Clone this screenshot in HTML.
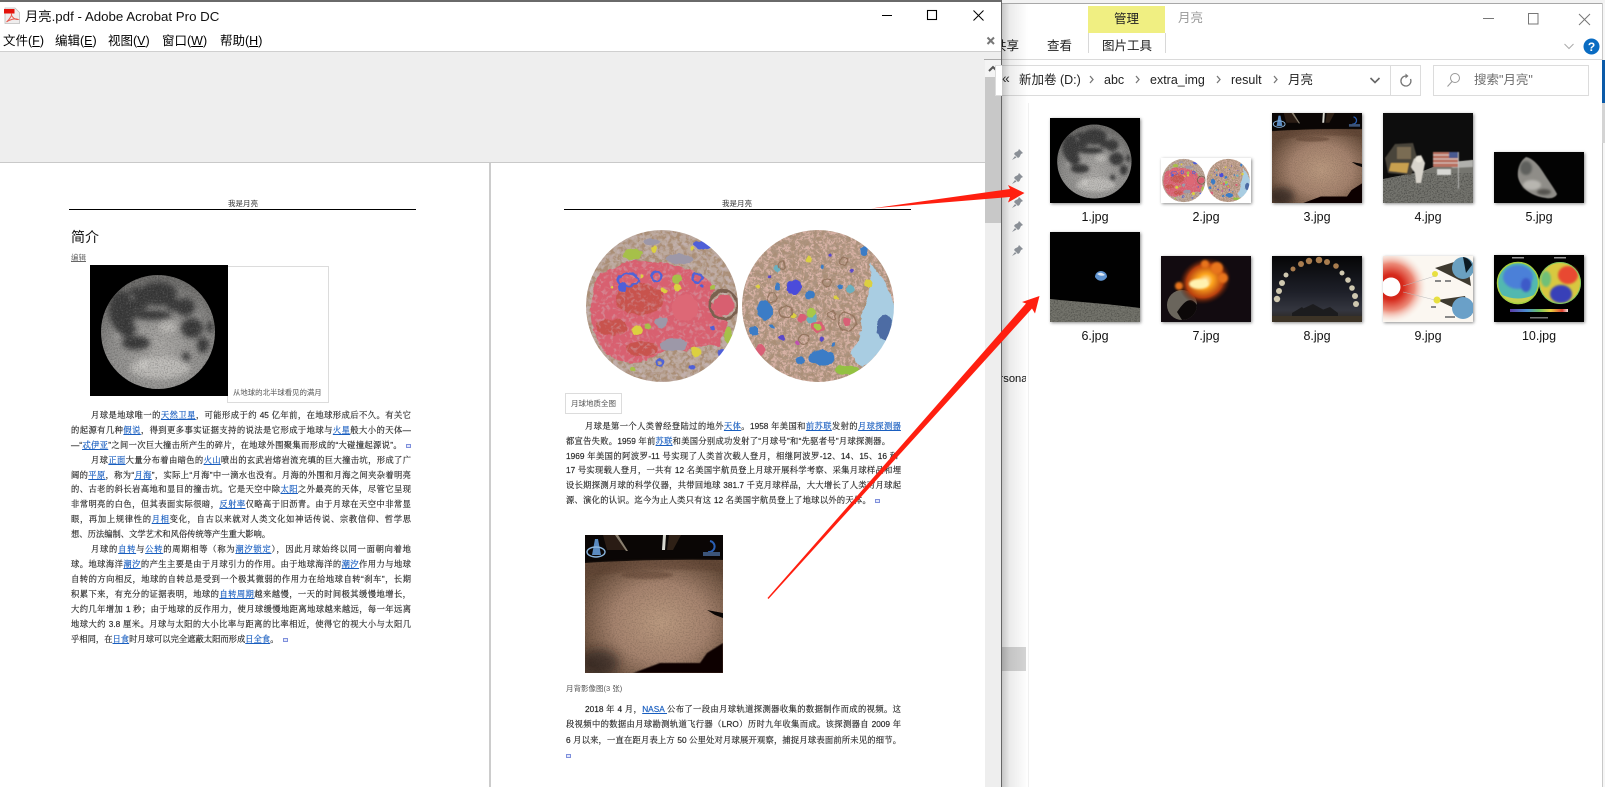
<!DOCTYPE html>
<html lang="zh"><head><meta charset="utf-8"><title>月亮.pdf - Adobe Acrobat Pro DC</title>
<style>
*{box-sizing:border-box}
html,body{margin:0;padding:0;width:1605px;height:787px;overflow:hidden;background:#fff}
body{position:relative;font-family:"Liberation Sans","Noto Sans CJK SC",sans-serif;color:#000}
.a{position:absolute}
.t{position:absolute;white-space:nowrap;line-height:1}
.l{position:absolute;height:12px;line-height:12px;font-size:8.3px;color:#222;white-space:normal;text-align:justify;text-align-last:justify;overflow:visible;font-family:"Liberation Sans","Noto Serif CJK SC",serif;-webkit-text-stroke:.18px #333}
.l.n{text-align-last:left;white-space:nowrap}
.l a{color:#1a5fc0;text-decoration:underline;-webkit-text-stroke:.18px #1a5fc0}
.r{display:inline-block;width:5px;height:4px;border:1px solid #7f90dc;background:#e4e8fa;margin-left:4px}
.m{position:absolute;top:34px;font-size:12.5px;line-height:14px;white-space:nowrap}
.m u{text-underline-offset:1px}
.th{position:absolute;box-shadow:1px 1px 3px rgba(0,0,0,.45);display:block}
.lb{position:absolute;width:90px;text-align:center;font-size:12.5px;line-height:14px;color:#111}
.cr{position:absolute;top:73px;font-size:12.5px;line-height:14px;color:#222;white-space:nowrap}
.sep{position:absolute;top:75px;width:5px;height:9px}
</style></head><body>

<svg width="0" height="0" style="position:absolute">
<defs>
<filter id="bl05" x="-10%" y="-10%" width="120%" height="120%"><feGaussianBlur stdDeviation=".5"/></filter>
<filter id="bl1" x="-30%" y="-30%" width="160%" height="160%"><feGaussianBlur stdDeviation="1"/></filter>
<filter id="bl2" x="-30%" y="-30%" width="160%" height="160%"><feGaussianBlur stdDeviation="2.600"/></filter>
<filter id="bl4" x="-30%" y="-30%" width="160%" height="160%"><feGaussianBlur stdDeviation="5"/></filter>
<filter id="grain" x="0" y="0" width="1" height="1"><feTurbulence type="fractalNoise" baseFrequency=".7" numOctaves="2" seed="5"/><feColorMatrix values="0 0 0 0 0 0 0 0 0 0 0 0 0 0 0 2.6 0 0 0 -1.1"/><feComposite in2="SourceAlpha" operator="in"/></filter>
<filter id="grainw" x="0" y="0" width="1" height="1"><feTurbulence type="fractalNoise" baseFrequency=".6" numOctaves="2" seed="11"/><feColorMatrix values="0 0 0 0 1 0 0 0 0 1 0 0 0 0 1 2.8 0 0 0 -1.35"/><feComposite in2="SourceAlpha" operator="in"/></filter>
<filter id="brown" x="0" y="0" width="1" height="1"><feTurbulence type="fractalNoise" baseFrequency=".22" numOctaves="3" seed="3"/><feColorMatrix values="0 0 0 0 .40 0 0 0 0 .27 0 0 0 0 .18 5 0 0 0 -2.100"/><feComposite in2="SourceAlpha" operator="in"/></filter>
<filter id="brownf" x="0" y="0" width="1" height="1"><feTurbulence type="fractalNoise" baseFrequency=".5" numOctaves="2" seed="17"/><feColorMatrix values="0 0 0 0 .42 0 0 0 0 .30 0 0 0 0 .22 6 0 0 0 -2.700"/><feComposite in2="SourceAlpha" operator="in"/></filter>
<filter id="purp" x="0" y="0" width="1" height="1"><feTurbulence type="fractalNoise" baseFrequency=".25" numOctaves="2" seed="8"/><feColorMatrix values="0 0 0 0 .62 0 0 0 0 .52 0 0 0 0 .6 5 0 0 0 -2.5"/><feComposite in2="SourceAlpha" operator="in"/></filter>
<filter id="rough" filterUnits="userSpaceOnUse" x="0" y="0" width="316" height="158"><feTurbulence type="fractalNoise" baseFrequency=".12" numOctaves="3" seed="21" result="n"/><feDisplacementMap in="SourceGraphic" in2="n" scale="5" xChannelSelector="R" yChannelSelector="G"/><feGaussianBlur stdDeviation=".35"/></filter>
<radialGradient id="mg" cx=".52" cy=".65" r=".62"><stop offset="0" stop-color="#aaa8a5"/><stop offset=".7" stop-color="#8f8e8c"/><stop offset="1" stop-color="#6c6b69"/></radialGradient>
<radialGradient id="soil" cx=".55" cy=".55" r=".62"><stop offset="0" stop-color="#bb9a80"/><stop offset=".55" stop-color="#a5836e"/><stop offset="1" stop-color="#664c3a"/></radialGradient>
<radialGradient id="sunr" gradientUnits="userSpaceOnUse" cx="8" cy="31" r="36"><stop offset="0" stop-color="#c81a12"/><stop offset=".35" stop-color="#d62a1c"/><stop offset=".65" stop-color="#ec8a78"/><stop offset="1" stop-color="#f8efe6" stop-opacity="0"/></radialGradient>
<radialGradient id="fire" cx=".5" cy=".5" r=".5"><stop offset="0" stop-color="#fff6c8"/><stop offset=".3" stop-color="#fca41e"/><stop offset=".7" stop-color="#b8400e"/><stop offset="1" stop-color="#3a1208" stop-opacity="0"/></radialGradient>
<linearGradient id="sky8" x1="0" x2="0" y1="0" y2="1"><stop offset="0" stop-color="#050506"/><stop offset=".55" stop-color="#1e2029"/><stop offset=".82" stop-color="#34363f"/><stop offset="1" stop-color="#29241c"/></linearGradient>
<linearGradient id="cb" x1="0" x2="1"><stop offset="0" stop-color="#5a3ca8"/><stop offset=".3" stop-color="#4a90d0"/><stop offset=".5" stop-color="#70c060"/><stop offset=".7" stop-color="#e8d040"/><stop offset=".9" stop-color="#e04030"/><stop offset="1" stop-color="#f0e0e0"/></linearGradient>
<clipPath id="mc"><circle cx="68" cy="67" r="57"/></clipPath>
<clipPath id="c1"><circle cx="80" cy="79" r="76"/></clipPath>
<clipPath id="c2"><circle cx="236" cy="79" r="76"/></clipPath>

<symbol id="moon" viewBox="0 0 138 131" preserveAspectRatio="none">
<rect width="138" height="131" fill="#000"/>
<circle cx="68" cy="67" r="57" fill="url(#mg)"/>
<g clip-path="url(#mc)">
<g fill="#3a3a3a" filter="url(#bl2)">
<ellipse cx="68" cy="29" rx="19" ry="12"/><ellipse cx="32" cy="46" rx="13" ry="20"/><ellipse cx="48" cy="34" rx="12" ry="12"/>
<ellipse cx="95" cy="42" rx="10" ry="9"/><ellipse cx="102" cy="63" rx="11" ry="10"/><ellipse cx="113" cy="80" rx="6" ry="8"/>
<ellipse cx="120" cy="62" rx="3.500" ry="6"/><ellipse cx="46" cy="78" rx="14" ry="7"/><ellipse cx="62" cy="50" rx="20" ry="5"/><ellipse cx="96" cy="92" rx="4" ry="5"/><ellipse cx="36" cy="64" rx="10" ry="8"/><ellipse cx="84" cy="40" rx="8" ry="6"/>
</g>
<g fill="#dedcd8" filter="url(#bl2)"><ellipse cx="70" cy="103" rx="30" ry="11" opacity=".5"/><ellipse cx="78" cy="62" rx="9" ry="6" opacity=".45"/><circle cx="53" cy="98" r="3"/><circle cx="28" cy="70" r="2"/><circle cx="42" cy="32" r="2" opacity=".7"/></g>
<rect width="138" height="131" fill="#000" filter="url(#grain)" opacity=".22"/>
<rect width="138" height="131" fill="#fff" filter="url(#grainw)" opacity=".14"/>
</g>
</symbol>

<symbol id="map" viewBox="0 0 316 158" preserveAspectRatio="none">
<rect width="316" height="158" fill="#fff"/>
<g clip-path="url(#c1)">
<g filter="url(#rough)">
<rect x="0" y="0" width="160" height="158" fill="#bca99e"/>
<rect x="0" y="0" width="160" height="158" fill="#7a5c4a" filter="url(#brown)"/>
<path d="M12 60 Q14 44 32 42 L44 34 Q70 34 90 38 Q112 42 128 54 L132 64 L128 72 L146 96 L136 120 Q120 116 104 124 Q86 118 72 130 Q48 142 24 128 Q10 108 8 84Z" fill="#d8616f"/>
<g fill="#c8534e"><ellipse cx="58" cy="72" rx="24" ry="16"/><ellipse cx="30" cy="100" rx="16" ry="8"/><ellipse cx="60" cy="122" rx="16" ry="8"/></g>
<rect x="0" y="0" width="160" height="158" fill="#9a6ca0" filter="url(#purp)" opacity=".35"/>
<ellipse cx="103" cy="81" rx="13" ry="13" fill="#dd6876"/>
<circle cx="142" cy="78" r="14" fill="none" stroke="#7a6050" stroke-width="3"/><circle cx="142" cy="78" r="10.500" fill="#d85f70"/>
<g fill="none" stroke="#4f63d8" stroke-width="2.200"><ellipse cx="46" cy="53" rx="11" ry="6"/><circle cx="75" cy="50" r="4.500"/><circle cx="115" cy="51" r="4.500"/><circle cx="78" cy="136" r="3.500"/></g>
<g fill="#4f5ed8"><ellipse cx="40" cy="60" rx="5" ry="5"/><ellipse cx="121" cy="18" rx="9" ry="4"/><circle cx="140" cy="126" r="5"/><circle cx="110" cy="140" r="3"/><circle cx="120" cy="60" r="2"/><circle cx="95" cy="120" r="2"/><circle cx="130" cy="100" r="2"/></g>
<g fill="#a6c04a"><ellipse cx="51" cy="27" rx="9" ry="6"/><circle cx="95" cy="52" r="5"/><circle cx="66" cy="100" r="3.500"/><ellipse cx="146" cy="108" rx="4" ry="8"/><circle cx="51" cy="142" r="3"/><circle cx="130" cy="60" r="3"/></g>
<g fill="#dcd040"><circle cx="95" cy="61" r="4"/><circle cx="55" cy="103" r="5"/><circle cx="114" cy="125" r="5"/><circle cx="82" cy="64" r="2.500"/><circle cx="72" cy="22" r="3"/><circle cx="110" cy="22" r="2"/><circle cx="30" cy="60" r="1.500"/><circle cx="60" cy="50" r="1.500"/></g>
<g fill="#9d98a8"><ellipse cx="80" cy="95" rx="7" ry="5"/><ellipse cx="92" cy="118" rx="14" ry="6"/><ellipse cx="98" cy="32" rx="14" ry="5"/><ellipse cx="70" cy="15" rx="8" ry="3"/></g>
</g></g>
<g clip-path="url(#c2)">
<g filter="url(#rough)">
<rect x="156" y="0" width="160" height="158" fill="#d8b2a6"/>
<rect x="156" y="0" width="160" height="158" fill="#7a5c4a" filter="url(#brown)"/>
<rect x="156" y="0" width="160" height="158" fill="#7a5c4a" filter="url(#brownf)"/>
<path d="M288 36 Q312 60 312 90 Q310 120 280 140 L268 128 Q282 110 278 90 Q290 70 288 36Z" fill="#a9cde2"/>
<ellipse cx="303" cy="100" rx="8" ry="13" fill="#4d6ca4"/>
<g fill="#3b7bc6"><ellipse cx="183" cy="83" rx="8" ry="10"/><ellipse cx="240" cy="131" rx="13" ry="8"/><circle cx="228" cy="68" r="5"/><circle cx="172" cy="104" r="5"/><circle cx="218" cy="134" r="4"/><circle cx="196" cy="60" r="3"/><circle cx="258" cy="60" r="2.500"/><circle cx="282" cy="24" r="4"/><circle cx="240" cy="40" r="1.800"/><circle cx="190" cy="100" r="2"/><circle cx="252" cy="118" r="2"/></g>
<circle cx="212" cy="60" r="7.500" fill="#4b4bda"/>
<g fill="#6ab0c0"><circle cx="195" cy="42" r="3.500"/><circle cx="230" cy="92" r="5"/><circle cx="268" cy="62" r="4"/></g>
<ellipse cx="265" cy="143" rx="12" ry="5" fill="#93c143"/>
<g fill="#dcd040"><circle cx="286" cy="56" r="4.500"/><circle cx="227" cy="33" r="3.500"/><circle cx="211" cy="88" r="2.500"/><circle cx="255" cy="70" r="2.500"/><circle cx="176" cy="60" r="2"/></g>
<g fill="#d95f76"><circle cx="220" cy="91" r="4.500"/><circle cx="236" cy="100" r="6"/><circle cx="178" cy="123" r="5"/><circle cx="265" cy="95" r="4"/></g>
<g fill="#a8c848"><circle cx="229" cy="85" r="4.500"/><circle cx="236" cy="100" r="4"/></g>
<g fill="none" stroke="#95745e" stroke-width="1.300"><circle cx="265" cy="95" r="9"/><circle cx="190" cy="70" r="5"/><circle cx="204" cy="85" r="6"/><circle cx="245" cy="55" r="4"/><circle cx="262" cy="34" r="4"/><circle cx="200" cy="38" r="4"/><circle cx="222" cy="112" r="5"/><circle cx="250" cy="88" r="4"/></g>
<g fill="#5a4ac8"><circle cx="200" cy="111" r="3"/><circle cx="240" cy="112" r="2.500"/><circle cx="188" cy="50" r="1.800"/><circle cx="248" cy="28" r="1.800"/><circle cx="270" cy="44" r="1.800"/></g>
<circle cx="215" cy="116" r="2.500" fill="#c050b0"/>
</g></g>
</symbol>

<symbol id="far" viewBox="0 0 138 138" preserveAspectRatio="none">
<rect width="138" height="138" fill="#0a0605"/>
<path d="M18 0L34 0 40 15 22 15Z" fill="#2a1c14"/><path d="M30 0h3l10 16h-2z" fill="#8a8070"/>
<path d="M78 0h3l-1 15h-3z" fill="#d8d8d0"/><path d="M84 0h12l-8 15h-6z" fill="#2e2016"/>
<path d="M0 28 Q60 24 138 25V138H0Z" fill="url(#soil)"/>
<path d="M0 28 Q60 24 138 25V36 Q60 32 0 42Z" fill="#5e4232" opacity=".45" filter="url(#bl1)"/>
<ellipse cx="62" cy="40" rx="26" ry="4" fill="#5e4232" opacity=".5" filter="url(#bl1)"/>
<rect y="25" width="138" height="113" fill="#000" filter="url(#grain)" opacity=".15"/>
<path d="M48 138 L75 128 L115 128 L122 118 L138 108 V138Z" fill="#0a0605" filter="url(#bl05)"/>
<path d="M122 75 L138 78 V83 L130 80Z" fill="#0a0605"/>
<ellipse cx="14" cy="128" rx="20" ry="14" fill="#1e1712" opacity=".55" filter="url(#bl4)"/>
<path d="M10 4 L13 4 L16 20 L7 20Z" fill="#5a8ac0"/><ellipse cx="11" cy="17" rx="9" ry="5" fill="none" stroke="#8ab4dc" stroke-width="1.400"/>
<path d="M125 6 a5 5 0 1 1 -2 11" fill="none" stroke="#2a5fb4" stroke-width="2"/><rect x="118" y="17" width="17" height="4" fill="#3c5478"/>
</symbol>
</defs>
</svg>

<!-- Acrobat window -->
<div class="a" style="left:0;top:0;width:1002px;height:787px;background:#fff;border-top:2px solid #6a6a6a;border-right:1px solid #666"></div>

<svg class="a" style="left:4px;top:7px" width="16" height="17" viewBox="0 0 16 17">
<path d="M1 1H11L15.500 5.500V16.500H1Z" fill="#efeded" stroke="#bdbdbd" stroke-width=".8"/>
<rect x="0" y="2" width="10.500" height="4.500" fill="#e4130c"/>
<path d="M2.500 15 C6 12 8 8 7.500 7 C7 8.500 10 13 14 12.500 C11 11 6 12.500 2.500 15Z" fill="none" stroke="#e85c50" stroke-width="1"/>
</svg>
<div class="t" style="left:25px;top:8px;font-size:13.300px;color:#111;line-height:17px">月亮.pdf - Adobe Acrobat Pro DC</div>

<svg class="a" style="left:880px;top:8px" width="116" height="38" viewBox="0 0 116 38">
<path d="M2 7.500H12" stroke="#000" stroke-width="1"/><rect x="47.500" y="2.500" width="9" height="9" fill="none" stroke="#000" stroke-width="1.100"/><path d="M93.500 2.500L103.500 12.500M103.500 2.500L93.500 12.500" stroke="#000" stroke-width="1"/>
<path d="M114 29.500L107.500 36M107.500 29.500L114 36" stroke="#777" stroke-width="2"/>
</svg>

<div class="m" style="left:3px">文件(<u>F</u>)</div>
<div class="m" style="left:55px">编辑(<u>E</u>)</div>
<div class="m" style="left:108px">视图(<u>V</u>)</div>
<div class="m" style="left:162px">窗口(<u>W</u>)</div>
<div class="m" style="left:220px">帮助(<u>H</u>)</div>

<div class="a" style="left:0;top:51px;width:1001px;height:1px;background:#cfcfcf"></div>
<div class="a" style="left:0;top:52px;width:985px;height:110px;background:#eeeeee"></div>
<div class="a" style="left:0;top:162px;width:985px;height:1px;background:#c9c9c9"></div>
<div class="a" style="left:489px;top:163px;width:2px;height:624px;background:#cccccc"></div>

<!-- scrollbar -->
<div class="a" style="left:985px;top:52px;width:16px;height:735px;background:#eeeeee"></div>
<div class="a" style="left:984px;top:59px;width:17px;height:1px;background:#aaa"></div>
<div class="a" style="left:985px;top:60px;width:16px;height:17px;background:#f4f4f4"></div>
<svg class="a" style="left:986px;top:64px" width="14" height="10" viewBox="0 0 14 10"><path d="M3 7L7 3L11 7" fill="none" stroke="#555" stroke-width="2"/></svg>
<div class="a" style="left:985px;top:77px;width:16px;height:146px;background:#c8c8c8"></div>

<!-- left page -->
<div class="t" style="left:228px;top:199px;font-size:7.500px;line-height:9px;color:#333">我是月亮</div>
<div class="a" style="left:69px;top:209px;width:347px;height:1px;background:#000"></div>
<div class="t" style="left:71px;top:229px;font-size:14px;line-height:16px;color:#111">简介</div>
<div class="t" style="left:71px;top:254px;font-size:7.500px;line-height:8px;color:#666;text-decoration:underline">编辑</div>
<div class="a" style="left:227px;top:266px;width:102px;height:137px;border:1px solid #dcdcdc"></div>
<svg class="a" style="left:90px;top:265px" width="138" height="131"><use href="#moon" width="138" height="131"/></svg>
<div class="t" style="left:233px;top:388px;font-size:7.400px;line-height:9px;color:#555">从地球的北半球看见的满月</div>

<div class="l" style="left:91px;top:409px;width:320px">月球是地球唯一的<a>天然卫星</a>，可能形成于约 45 亿年前，在地球形成后不久。有关它</div>
<div class="l" style="left:71px;top:424px;width:340px">的起源有几种<a>假说</a>，得到更多事实证据支持的说法是它形成于地球与<a>火星</a>般大小的天体—</div>
<div class="l" style="left:71px;top:439px;width:340px">—“<a>忒伊亚</a>”之间一次巨大撞击所产生的碎片，在地球外围聚集而形成的“大碰撞起源说”。<span class="r"></span></div>
<div class="l" style="left:91px;top:454px;width:320px">月球<a>正面</a>大量分布着由暗色的<a>火山</a>喷出的玄武岩熔岩流充填的巨大撞击坑，形成了广</div>
<div class="l" style="left:71px;top:469px;width:340px">阔的<a>平原</a>，称为“<a>月海</a>”，实际上“月海”中一滴水也没有。月海的外围和月海之间夹杂着明亮</div>
<div class="l" style="left:71px;top:483px;width:340px">的、古老的斜长岩高地和显目的撞击坑。它是天空中除<a>太阳</a>之外最亮的天体，尽管它呈现</div>
<div class="l" style="left:71px;top:498px;width:340px">非常明亮的白色，但其表面实际很暗，<a>反射率</a>仅略高于旧沥青。由于月球在天空中非常显</div>
<div class="l" style="left:71px;top:513px;width:340px">眼，再加上规律性的<a>月相</a>变化，自古以来就对人类文化如神话传说、宗教信仰、哲学思</div>
<div class="l n" style="left:71px;top:528px;width:340px">想、历法编制、文学艺术和风俗传统等产生重大影响。</div>
<div class="l" style="left:91px;top:543px;width:320px">月球的<a>自转</a>与<a>公转</a>的周期相等（称为<a>潮汐锁定</a>），因此月球始终以同一面朝向着地</div>
<div class="l" style="left:71px;top:558px;width:340px">球。地球海洋<a>潮汐</a>的产生主要是由于月球引力的作用。由于地球海洋的<a>潮汐</a>作用力与地球</div>
<div class="l" style="left:71px;top:573px;width:340px">自转的方向相反，地球的自转总是受到一个极其微弱的作用力在给地球自转“刹车”，长期</div>
<div class="l" style="left:71px;top:588px;width:340px">积累下来，有充分的证据表明，地球的<a>自转周期</a>越来越慢，一天的时间极其缓慢地增长，</div>
<div class="l" style="left:71px;top:603px;width:340px">大约几年增加 1 秒；由于地球的反作用力，使月球缓慢地距离地球越来越远，每一年远离</div>
<div class="l" style="left:71px;top:618px;width:340px">地球大约 3.8 厘米。月球与太阳的大小比率与距离的比率相近，使得它的视大小与太阳几</div>
<div class="l n" style="left:71px;top:633px;width:340px">乎相同，在<a>日食</a>时月球可以完全遮蔽太阳而形成<a>日全食</a>。<span class="r"></span></div>

<!-- right page -->
<div class="t" style="left:722px;top:199px;font-size:7.500px;line-height:9px;color:#333">我是月亮</div>
<div class="a" style="left:564px;top:209px;width:347px;height:1px;background:#000"></div>
<svg class="a" style="left:582px;top:227px" width="316" height="158"><use href="#map" width="316" height="158"/></svg>
<div class="a" style="left:565px;top:393px;width:57px;height:21px;border:1px solid #dcdcdc"></div>
<div class="t" style="left:571px;top:399px;font-size:7.500px;line-height:9px;color:#555">月球地质全图</div>

<div class="l" style="left:585px;top:420px;width:316px">月球是第一个人类曾经登陆过的地外<a>天体</a>。1958 年美国和<a>前苏联</a>发射的<a>月球探测器</a></div>
<div class="l" style="left:566px;top:435px;width:324px">都宣告失败。1959 年前<a>苏联</a>和美国分别成功发射了“月球号”和“先驱者号”月球探测器。</div>
<div class="l" style="left:566px;top:450px;width:332px">1969 年美国的阿波罗-11 号实现了人类首次载人登月，相继阿波罗-12、14、15、16 和</div>
<div class="l" style="left:566px;top:464px;width:335px">17 号实现载人登月，一共有 12 名美国宇航员登上月球开展科学考察、采集月球样品和埋</div>
<div class="l" style="left:566px;top:479px;width:335px">设长期探测月球的科学仪器，共带回地球 381.7 千克月球样品，大大增长了人类对月球起</div>
<div class="l" style="left:566px;top:494px;width:314px">源、演化的认识。迄今为止人类只有这 12 名美国宇航员登上了地球以外的天体。<span class="r"></span></div>

<svg class="a" style="left:585px;top:535px" width="138" height="138"><use href="#far" width="138" height="138"/></svg>
<div class="t" style="left:566px;top:684px;font-size:7.500px;line-height:9px;color:#555">月背影像图(3 张)</div>

<div class="l" style="left:585px;top:703px;width:316px">2018 年 4 月，<a>NASA </a>公布了一段由月球轨道探测器收集的数据制作而成的视频。这</div>
<div class="l" style="left:566px;top:718px;width:335px">段视频中的数据由月球勘测轨道飞行器（LRO）历时九年收集而成。该探测器自 2009 年</div>
<div class="l" style="left:566px;top:734px;width:335px">6 月以来，一直在距月表上方 50 公里处对月球展开观察，捕捉月球表面前所未见的细节。</div>
<div class="l n" style="left:562px;top:749px;width:20px"><span class="r"></span></div>

<!-- Explorer window -->
<div class="a" style="left:1002px;top:0;width:600px;height:787px;background:#fff"></div>
<div class="a" style="left:1002px;top:0;width:603px;height:3px;background:#f2f2f2"></div>
<div class="a" style="left:1002px;top:3px;width:600px;height:1px;background:#a8a8a8"></div>
<div class="a" style="left:1602px;top:3px;width:1px;height:784px;background:#c8c8c8"></div>
<div class="a" style="left:1603px;top:3px;width:2px;height:784px;background:#f6f6f6"></div>

<div class="a" style="left:1088px;top:6px;width:77px;height:27px;background:#f0ef82"></div>
<div class="t" style="left:1114px;top:12px;font-size:12.500px;line-height:15px;color:#222">管理</div>
<div class="t" style="left:1178px;top:11px;font-size:12.500px;line-height:15px;color:#999">月亮</div>
<svg class="a" style="left:1480px;top:12px" width="115" height="16" viewBox="0 0 115 16"><path d="M3 6.500H14" stroke="#777"/><rect x="48.500" y="1.500" width="9.500" height="10.500" fill="none" stroke="#777"/><path d="M99 2L110 13M110 2L99 13" stroke="#777"/></svg>

<div class="a" style="left:1088px;top:33px;width:1px;height:20px;background:#d8d8d8"></div>
<div class="a" style="left:1165px;top:33px;width:1px;height:20px;background:#d8d8d8"></div>
<div class="a" style="left:1089px;top:33px;width:76px;height:26px;background:#fff"></div>
<div class="t" style="left:1002px;top:39px;width:17px;overflow:hidden;font-size:12.500px;line-height:15px;color:#222;direction:rtl">共享</div>
<div class="t" style="left:1047px;top:39px;font-size:12.500px;line-height:15px;color:#222">查看</div>
<div class="t" style="left:1102px;top:39px;font-size:12.500px;line-height:15px;color:#222">图片工具</div>
<svg class="a" style="left:1563px;top:42px" width="12" height="9" viewBox="0 0 12 9"><path d="M1.500 2L6 6.500L10.500 2" fill="none" stroke="#aaa" stroke-width="1"/></svg>
<svg class="a" style="left:1583px;top:38px" width="17" height="17" viewBox="0 0 17 17"><circle cx="8.500" cy="8.500" r="8" fill="#0a6cc2"/><text x="8.500" y="13" font-family="Liberation Sans" font-weight="700" font-size="12" fill="#fff" text-anchor="middle">?</text></svg>
<div class="a" style="left:1002px;top:59px;width:600px;height:1px;background:#dadada"></div>

<!-- address -->
<div class="a" style="left:995px;top:65px;width:426px;height:31px;border:1px solid #dcdcdc;background:#fff"></div>
<div class="a" style="left:1390px;top:66px;width:1px;height:29px;background:#dcdcdc"></div>
<div class="t" style="left:1002px;top:70px;font-size:14px;line-height:16px;color:#333">«</div>
<div class="cr" style="left:1019px">新加卷 (D:)</div>
<div class="cr" style="left:1104px">abc</div>
<div class="cr" style="left:1150px">extra_img</div>
<div class="cr" style="left:1231px">result</div>
<div class="cr" style="left:1288px">月亮</div>
<svg class="sep" style="left:1089px"><path d="M1 1L4 4.500L1 8" fill="none" stroke="#777" stroke-width="1.300"/></svg>
<svg class="sep" style="left:1135px"><path d="M1 1L4 4.500L1 8" fill="none" stroke="#777" stroke-width="1.300"/></svg>
<svg class="sep" style="left:1216px"><path d="M1 1L4 4.500L1 8" fill="none" stroke="#777" stroke-width="1.300"/></svg>
<svg class="sep" style="left:1273px"><path d="M1 1L4 4.500L1 8" fill="none" stroke="#777" stroke-width="1.300"/></svg>
<svg class="a" style="left:1369px;top:76px" width="12" height="9" viewBox="0 0 12 9"><path d="M1.500 2L6 6.500L10.500 2" fill="none" stroke="#666" stroke-width="1.600"/></svg>
<svg class="a" style="left:1399px;top:73px" width="14" height="15" viewBox="0 0 14 15"><path d="M7 3A5 5 0 1 0 11.500 6" fill="none" stroke="#777" stroke-width="1.300"/><path d="M6.500 .5V5.500L9.500 3Z" fill="#777"/></svg>
<div class="a" style="left:1433px;top:65px;width:156px;height:31px;border:1px solid #dcdcdc;background:#fff"></div>
<svg class="a" style="left:1446px;top:72px" width="15" height="16" viewBox="0 0 15 16"><circle cx="9" cy="6" r="4.500" fill="none" stroke="#999" stroke-width="1"/><path d="M6 9.500L1.500 14.500" stroke="#999" stroke-width="1"/></svg>
<div class="t" style="left:1474px;top:72px;font-size:12.500px;line-height:16px;color:#6d6d6d">搜索"月亮"</div>

<!-- sidebar shadow and items -->
<div class="a" style="left:1028px;top:103px;width:1px;height:684px;background:#f0f0f0"></div>
<div class="t" style="left:1002px;top:372px;width:24px;overflow:hidden;font-size:11.200px;line-height:15px;color:#111;text-indent:-2.500px">rsonal</div>
<div class="a" style="left:1002px;top:647px;width:24px;height:24px;background:#d5d5d5"></div>
<div class="a" style="left:1002px;top:4px;width:26px;height:783px;background:linear-gradient(90deg,rgba(0,0,0,.22),rgba(0,0,0,.08) 30%,rgba(0,0,0,0))"></div>
<svg class="a" style="left:1011px;top:148px" width="13" height="112" viewBox="0 0 13 112"><g fill="#8a8f96">
<path d="M8 1L12 5L10 6L8.500 9L7 10L3 6L4 4.500L7 3ZM4 8L5.500 9.500L1 12Z"/>
<path transform="translate(0,24)" d="M8 1L12 5L10 6L8.500 9L7 10L3 6L4 4.500L7 3ZM4 8L5.500 9.500L1 12Z"/>
<path transform="translate(0,48)" d="M8 1L12 5L10 6L8.500 9L7 10L3 6L4 4.500L7 3ZM4 8L5.500 9.500L1 12Z"/>
<path transform="translate(0,72)" d="M8 1L12 5L10 6L8.500 9L7 10L3 6L4 4.500L7 3ZM4 8L5.500 9.500L1 12Z"/>
<path transform="translate(0,96)" d="M8 1L12 5L10 6L8.500 9L7 10L3 6L4 4.500L7 3ZM4 8L5.500 9.500L1 12Z"/>
</g></svg>
<div class="a" style="left:1602px;top:60px;width:3px;height:43px;background:#0b5aa8"></div>
<div class="a" style="left:1602px;top:103px;width:3px;height:40px;background:#d4d4d4"></div>

<!-- thumbs -->
<svg class="th" style="left:1050px;top:118px" width="90" height="85"><use href="#moon" width="90" height="85"/></svg>
<div class="lb" style="left:1050px;top:210px">1.jpg</div>
<svg class="th" style="left:1161px;top:158px" width="90" height="45"><use href="#map" width="90" height="45"/></svg>
<div class="lb" style="left:1161px;top:210px">2.jpg</div>
<svg class="th" style="left:1272px;top:113px" width="90" height="90"><use href="#far" width="90" height="90"/></svg>
<div class="lb" style="left:1272px;top:210px">3.jpg</div>

<svg class="th" style="left:1383px;top:113px" width="90" height="90" viewBox="0 0 90 90">
<rect width="90" height="90" fill="#0d0d0d"/>
<path d="M0 66 L40 58 L60 50 L90 47 V90 H0Z" fill="#75756f"/>
<rect y="60" width="90" height="30" fill="#000" filter="url(#grain)" opacity=".35"/>
<g filter="url(#bl05)">
<path d="M60 50 L90 47 V54 L70 55Z" fill="#b0b0ac"/>
<path d="M2 45L12 31L30 30L35 48L28 62L5 60Z" fill="#4a443a"/><path d="M14 34h14v12h-14z" fill="#7a6c52"/><path d="M8 50L26 50 24 60 6 58Z" fill="#c8a050"/>
<path d="M31 46 L38 42 L42 50 L40 60 L38 70 L33 70 L32 60 L28 54Z" fill="#d8d4cc"/><circle cx="36" cy="46" r="3.500" fill="#e8e4da"/>
<rect x="50" y="39" width="25" height="15" fill="#b87060"/><path d="M50 42h25M50 46h25M50 50h25" stroke="#d8c8c0" stroke-width="1"/><rect x="66" y="39" width="9" height="6" fill="#4a5a90"/><rect x="75" y="39" width=".8" height="37" fill="#ccc"/>
<rect x="54" y="56" width="14" height="6" fill="#d8d8d4"/>
</g>
</svg>
<div class="lb" style="left:1383px;top:210px">4.jpg</div>

<svg class="th" style="left:1494px;top:152px" width="90" height="51" viewBox="0 0 90 51">
<rect width="90" height="51" fill="#030303"/>
<g filter="url(#bl05)">
<path d="M32 5 C26 9 23 17 24 25 C26 35 36 44 52 46 C58 47 62 45 63 42 C60 36 54 28 49 20 C44 12 38 6 32 5Z" fill="#8f8d88"/>
<ellipse cx="32" cy="16" rx="6" ry="7" fill="#5f615d" filter="url(#bl1)"/><ellipse cx="38" cy="33" rx="9" ry="5" fill="#b8b6b0" filter="url(#bl1)"/><ellipse cx="50" cy="40" rx="7" ry="3" fill="#55534f" filter="url(#bl1)"/>
</g>
</svg>
<div class="lb" style="left:1494px;top:210px">5.jpg</div>

<svg class="th" style="left:1050px;top:232px" width="90" height="90" viewBox="0 0 90 90">
<rect width="90" height="90" fill="#010101"/>
<path d="M0 67 C30 70 60 72 90 76 V90 H0Z" fill="#74746c"/>
<rect y="68" width="90" height="22" fill="#000" filter="url(#grain)" opacity=".3"/>
<path d="M45 45 A6 6 0 0 1 57 45 C54 50 48 50 45 45Z" fill="#5f93cf"/><path d="M47 42 Q51 39 55 43 Q51 45 47 42Z" fill="#e0e8f2"/>
</svg>
<div class="lb" style="left:1050px;top:329px">6.jpg</div>

<svg class="th" style="left:1161px;top:256px" width="90" height="66" viewBox="0 0 90 66">
<rect width="90" height="66" fill="#120b10"/>
<circle cx="21" cy="49" r="15" fill="#6a655c"/><path d="M21 64 A15 15 0 0 0 36 49 C30 40 24 44 16 56Z" fill="#0c0808"/>
<ellipse cx="44" cy="25" rx="27" ry="23" fill="url(#fire)" transform="rotate(-25 44 25)"/>
<g fill="#e8741a" filter="url(#bl1)"><circle cx="56" cy="12" r="6"/><circle cx="62" cy="22" r="5"/><circle cx="44" cy="8" r="4"/><circle cx="18" cy="30" r="4"/></g>
<ellipse cx="38" cy="28" rx="10" ry="5" fill="#fff2b0" filter="url(#bl1)"/>
</svg>
<div class="lb" style="left:1161px;top:329px">7.jpg</div>

<svg class="th" style="left:1272px;top:256px" width="90" height="66" viewBox="0 0 90 66">
<rect width="90" height="66" fill="url(#sky8)"/>
<g fill="#a87c4e"><circle cx="21" cy="13" r="2.500"/><circle cx="29" cy="8" r="3"/><circle cx="37" cy="5" r="3.200"/><circle cx="47" cy="4" r="3.300"/><circle cx="55" cy="6" r="3"/><circle cx="64" cy="10" r="2.800"/></g>
<g fill="#cfc8b0"><circle cx="14" cy="19" r="2.500"/><circle cx="10" cy="27" r="3"/><circle cx="7" cy="35" r="3"/><circle cx="5" cy="43" r="3.200"/><circle cx="70" cy="17" r="2.500"/><circle cx="76" cy="24" r="2.800"/><circle cx="80" cy="32" r="2.800"/><circle cx="83" cy="40" r="3"/><circle cx="84" cy="48" r="3"/></g>
<g fill="#1c1c1e"><path d="M20 66V57L30 51L34 55V66Z"/><path d="M28 66V54L41 48L52 54V66Z"/><path d="M50 66V54L58 51L66 57V66Z"/></g>
<rect y="60" width="90" height="6" fill="#3c3326"/>
</svg>
<div class="lb" style="left:1272px;top:329px">8.jpg</div>

<svg class="th" style="left:1383px;top:256px" width="90" height="66" viewBox="0 0 90 66">
<rect width="90" height="66" fill="#fbf7f1"/>
<rect width="46" height="66" fill="url(#sunr)"/>
<circle cx="8" cy="31" r="9.500" fill="#fff"/>
<path d="M52 12 L84 2 L88 30Z" fill="#3e3a30"/><circle cx="80" cy="12" r="11" fill="#6aa0c0"/><path d="M80 1a11 11 0 0 1 9 8l-6 8z" fill="#0c1a22"/><circle cx="52" cy="18" r="3" fill="#e8e040"/>
<path d="M54 44 L82 40 L88 60Z" fill="#3e3a30"/><circle cx="80" cy="52" r="11" fill="#6aa0c8"/><circle cx="54" cy="44" r="3.500" fill="#e8e040"/>
<path d="M20 30L52 20M20 36L52 44" stroke="#bbb" stroke-width=".5"/>
<g fill="#888"><rect x="52" y="24" width="6" height="2"/><rect x="62" y="24" width="6" height="2"/><rect x="48" y="50" width="5" height="2"/><rect x="62" y="60" width="10" height="2"/></g>
</svg>
<div class="lb" style="left:1383px;top:329px">9.jpg</div>

<svg class="th" style="left:1494px;top:255px" width="90" height="67" viewBox="0 0 90 67">
<rect width="90" height="67" fill="#000"/>
<circle cx="24" cy="28" r="21" fill="#52b8b0"/><ellipse cx="24" cy="22" rx="15" ry="12" fill="#4c80d8" filter="url(#bl1)"/><ellipse cx="32" cy="30" rx="5" ry="7" fill="#3c5ac8" filter="url(#bl1)"/><path d="M6 39A21 21 0 0 0 42 39Q24 48 6 39Z" fill="#c8d050"/><circle cx="24" cy="28" r="20.500" fill="none" stroke="#a8d040" stroke-width="1.500"/>
<circle cx="66" cy="28" r="21" fill="#d8c840"/><ellipse cx="74" cy="20" rx="10" ry="9" fill="#e84830" filter="url(#bl1)"/><ellipse cx="67" cy="39" rx="11" ry="9" fill="#3840b8" filter="url(#bl1)"/><ellipse cx="52" cy="24" rx="5" ry="8" fill="#70c078" filter="url(#bl1)"/><circle cx="66" cy="28" r="20.500" fill="none" stroke="#80c860" stroke-width="1"/>
<rect x="16" y="54" width="58" height="3" fill="url(#cb)"/>
<rect x="18" y="2" width="12" height="1.500" fill="#999"/><rect x="60" y="2" width="12" height="1.500" fill="#999"/><rect x="36" y="62" width="18" height="1.500" fill="#777"/>
</svg>
<div class="lb" style="left:1494px;top:329px">10.jpg</div>

<!-- arrows -->
<svg class="a" style="left:0;top:0;pointer-events:none" width="1605" height="787" viewBox="0 0 1605 787">
<path d="M871 208.500 L1010 189 L1008 185 L1024.500 193 L1008 202.500 L1010 197 Z" fill="#ff1f10"/>
<path d="M767.500 598 L1026 303.500 L1022 302 L1039.500 296 L1035 313.500 L1032 308.500 L768.500 599Z" fill="#ff1f10"/>
</svg>
</body></html>
